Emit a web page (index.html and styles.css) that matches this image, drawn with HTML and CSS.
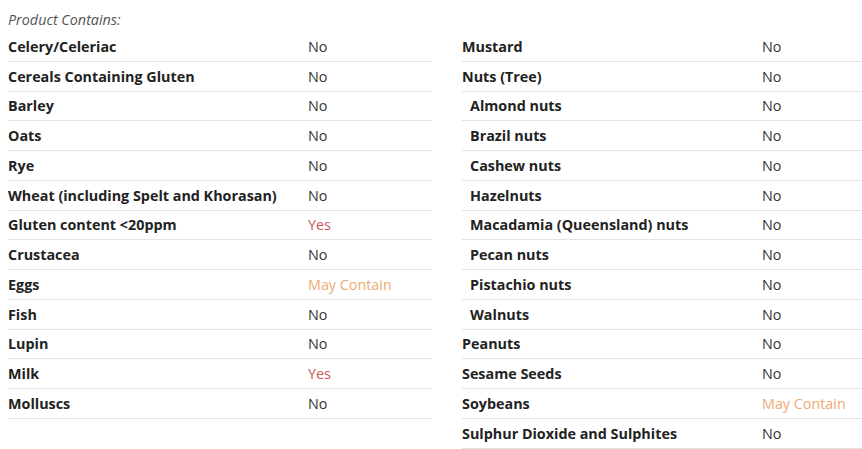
FILE: index.html
```html
<!DOCTYPE html>
<html>
<head>
<meta charset="utf-8">
<link rel="stylesheet" href="styles.css">
</head>
<body>
<div class="caption">Product Contains:</div>
<div class="cols">
  <div class="col">
    <div class="row"><span class="label">Celery/Celeriac</span><span class="val">No</span></div>
    <div class="row"><span class="label">Cereals Containing Gluten</span><span class="val">No</span></div>
    <div class="row"><span class="label">Barley</span><span class="val">No</span></div>
    <div class="row"><span class="label">Oats</span><span class="val">No</span></div>
    <div class="row"><span class="label">Rye</span><span class="val">No</span></div>
    <div class="row"><span class="label">Wheat (including Spelt and Khorasan)</span><span class="val">No</span></div>
    <div class="row"><span class="label">Gluten content &lt;20ppm</span><span class="val yes">Yes</span></div>
    <div class="row"><span class="label">Crustacea</span><span class="val">No</span></div>
    <div class="row"><span class="label">Eggs</span><span class="val may">May Contain</span></div>
    <div class="row"><span class="label">Fish</span><span class="val">No</span></div>
    <div class="row"><span class="label">Lupin</span><span class="val">No</span></div>
    <div class="row"><span class="label">Milk</span><span class="val yes">Yes</span></div>
    <div class="row"><span class="label">Molluscs</span><span class="val">No</span></div>
  </div>
  <div class="col">
    <div class="row"><span class="label">Mustard</span><span class="val">No</span></div>
    <div class="row"><span class="label">Nuts (Tree)</span><span class="val">No</span></div>
    <div class="row sub"><span class="label">Almond nuts</span><span class="val">No</span></div>
    <div class="row sub"><span class="label">Brazil nuts</span><span class="val">No</span></div>
    <div class="row sub"><span class="label">Cashew nuts</span><span class="val">No</span></div>
    <div class="row sub"><span class="label">Hazelnuts</span><span class="val">No</span></div>
    <div class="row sub"><span class="label">Macadamia (Queensland) nuts</span><span class="val">No</span></div>
    <div class="row sub"><span class="label">Pecan nuts</span><span class="val">No</span></div>
    <div class="row sub"><span class="label">Pistachio nuts</span><span class="val">No</span></div>
    <div class="row sub"><span class="label">Walnuts</span><span class="val">No</span></div>
    <div class="row"><span class="label">Peanuts</span><span class="val">No</span></div>
    <div class="row"><span class="label">Sesame Seeds</span><span class="val">No</span></div>
    <div class="row"><span class="label">Soybeans</span><span class="val may">May Contain</span></div>
    <div class="row"><span class="label">Sulphur Dioxide and Sulphites</span><span class="val">No</span></div>
  </div>
</div>
</body>
</html>
```
FILE: styles.css
```css
html, body {
  overflow: hidden;
}
body {
  margin: 8px 0 8px 8px;
  font-family: "Open Sans", "DejaVu Sans", sans-serif;
  font-size: 14.35px;
  color: #333;
  background: #fff;
}
.caption {
  font-style: italic;
  color: #555;
  line-height: 24px;
}
.cols {
  display: grid;
  grid-template-columns: 424px 1fr;
  column-gap: 30px;
}
.row {
  display: flex;
  height: 28.75px;
  align-items: center;
  border-bottom: 1px solid #e3e3e3;
}
.label {
  width: 300px;
  flex: none;
  font-weight: bold;
  color: #222;
}
.sub .label {
  padding-left: 8px;
  width: 292px;
}
.val {
  color: #333;
}
.val.yes {
  color: #c65a5a;
}
.val.may {
  color: #eeab72;
}
```
